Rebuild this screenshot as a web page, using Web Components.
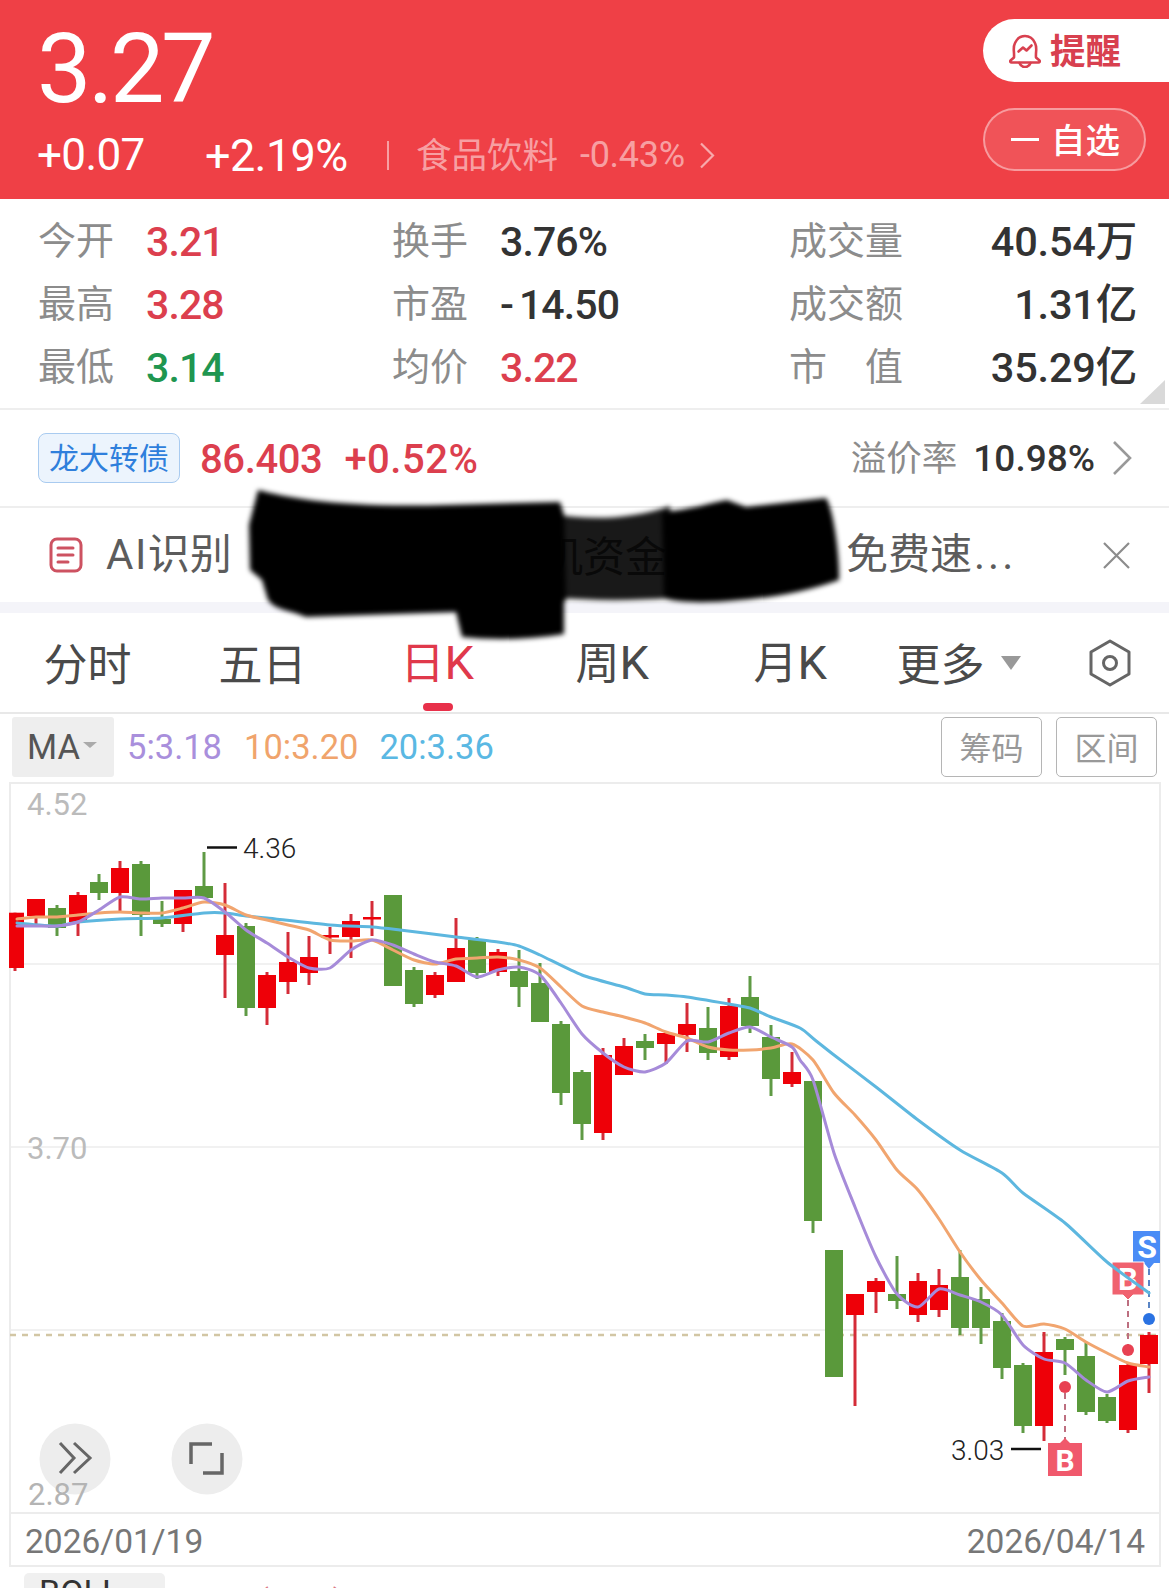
<!DOCTYPE html>
<html lang="zh"><head><meta charset="utf-8"><title>K</title>
<style>
html,body{margin:0;padding:0;background:#fff}
body{width:1169px;height:1588px;overflow:hidden;position:relative;font-family:Roboto,"Noto Sans CJK SC",sans-serif;color:#333}
</style></head><body>
<quote-header></quote-header>
<stat-panel>
  <stat-item tone="red" col="1"><span slot="label">今开</span>3.21</stat-item>
  <stat-item tone="dark" col="2"><span slot="label">换手</span>3.76%</stat-item>
  <stat-item tone="dark" col="3"><span slot="label">成交量</span>40.54万</stat-item>
  <stat-item tone="red" col="1"><span slot="label">最高</span>3.28</stat-item>
  <stat-item tone="dark" col="2"><span slot="label">市盈</span><span style="letter-spacing:5px">-</span>14.50</stat-item>
  <stat-item tone="dark" col="3"><span slot="label">成交额</span>1.31亿</stat-item>
  <stat-item tone="green" col="1"><span slot="label">最低</span>3.14</stat-item>
  <stat-item tone="red" col="2"><span slot="label">均价</span>3.22</stat-item>
  <stat-item tone="dark" col="3"><span slot="label">市　值</span>35.29亿</stat-item>
</stat-panel>
<bond-row></bond-row>
<notice-row></notice-row>
<period-tabs></period-tabs>
<ma-bar></ma-bar>
<kline-chart></kline-chart>
<date-axis></date-axis>
<indicator-bar></indicator-bar>
<redaction-mark></redaction-mark>
<script>
function def(name, html, init){
  customElements.define(name, class extends HTMLElement{
    constructor(){super();const s=this.attachShadow({mode:'open'});s.innerHTML=html;if(init)init(s,this);}
  });
}
const NUM='Roboto,"Noto Sans CJK SC",sans-serif';
def('quote-header',`<style>
:host{display:flex;justify-content:space-between;height:199px;background:#ef4046;color:#fff;font-family:${NUM}}
.l{padding-left:37px}
.p{font-size:97px;line-height:94px;font-weight:450;letter-spacing:-3.500px;margin-top:22px}
.s{display:flex;align-items:center;height:44px;margin-top:17px}
.c{font-size:44px;font-weight:450;letter-spacing:-.6px;width:106px}.pc{font-size:45px;font-weight:450;letter-spacing:-.6px;margin-left:62px;width:145px}
.d{width:2px;height:29px;background:rgba(255,255,255,.5);margin:0 27px 0 37px}
.i{font-size:35.500px;line-height:44px;color:rgba(255,255,255,.52);font-family:"Noto Sans CJK SC",sans-serif;position:relative;top:-2px;width:143px;white-space:nowrap}
.v{font-size:36px;letter-spacing:-.3px;color:rgba(255,255,255,.52);margin-left:21px}
.r{display:flex;flex-direction:column;align-items:flex-end;padding-top:19px}
.a{width:186px;height:63px;box-sizing:border-box;background:#fff;border-radius:32px 0 0 32px;display:flex;align-items:center;padding-left:26px;gap:9px;color:#d8404f;font:700 35.500px/63px "Noto Sans CJK SC",sans-serif}
.a span,.b span{position:relative;top:-2px}
.b{width:163px;height:63px;box-sizing:border-box;margin:26px 23px 0 0;border:2px solid rgba(255,255,255,.42);background:rgba(255,255,255,.1);border-radius:32px;display:flex;align-items:center;padding-left:26px;gap:12px;font:500 34.500px/60px "Noto Sans CJK SC",sans-serif}
.b .m{width:28px;height:3.500px;background:#fff;top:0}
svg{display:block}
</style>
<div class="l"><div class="p">3.27</div><div class="s"><span class="c">+0.07</span><span class="pc">+2.19%</span><span class="d"></span><span class="i">食品饮料</span><span class="v">-0.43%</span>
<svg width="16" height="27" viewBox="0 0 16 27" style="margin-left:14px"><path d="M2 1.500 14 13.500 2 25.500" fill="none" stroke="rgba(255,255,255,.55)" stroke-width="2.200"/></svg></div></div>
<div class="r"><div class="a"><svg width="32" height="34" viewBox="0 0 32 34" fill="none" stroke="#d8404f" stroke-width="2.600" stroke-linejoin="round" stroke-linecap="round"><path d="M5 23.500C5.500 17 3.500 14 6 9 8 4.500 12 2 16 2s8 2.500 10 7c2.500 5 .5 8 1 14.500l3.500 3c.8 1 0 2-1 2H2.500c-1 0-1.800-1-1-2z"/><path d="M10.500 29c1 2.800 3 4 5.500 4s4.500-1.200 5.500-4"/><path d="M9.500 17.500l4.500-4 3.500 3 5-5"/></svg><span>提醒</span></div>
<div class="b"><span class="m"></span><span>自选</span></div></div>`);

def('stat-panel',`<style>
:host{display:grid;grid-template-columns:354px 397px 348px;grid-auto-rows:63px;padding:10px 0 10px 38px;height:189px;border-bottom:2px solid #eee;position:relative}
.t{position:absolute;right:4px;bottom:4px;width:0;height:0;border-style:solid;border-width:0 0 24px 25px;border-color:transparent transparent #d9d9d9 transparent}
</style><slot></slot><div class="t"></div>`);

def('stat-item',`<style>
:host{display:flex;align-items:center;height:63px;font-family:${NUM};font-size:41px;line-height:50px;font-weight:500;letter-spacing:-.9px}
:host([col="3"]){justify-content:space-between;letter-spacing:-.2px;font-size:41.500px}
:host([tone=red]) .v{color:#dc3f4e}
:host([tone=green]) .v{color:#1f9650}
:host([tone=dark]) .v{color:#333}
.v{position:relative;top:1px;white-space:nowrap}
.l{width:108px;flex:none;color:#8c8c8c;font:400 38px/50px "Noto Sans CJK SC",sans-serif;letter-spacing:0;position:relative;top:-3px}
:host([col="3"]) .l{width:auto}
</style><span class="l"><slot name="label"></slot></span><span class="v"><slot></slot></span>`);

def('bond-row',`<style>
:host{display:flex;align-items:center;height:96px;padding:0 37px 0 38px;border-bottom:2px solid #eee;font-family:${NUM};position:relative}
.t{width:142px;height:50px;box-sizing:border-box;border:1.500px solid #a9cbf0;background:#ecf4fd;border-radius:8px;color:#2f7fdc;font:400 30px/44px "Noto Sans CJK SC",sans-serif;text-align:center;margin-right:20px}
.n{font-size:40px;letter-spacing:-.4px;color:#dc3f4e;font-weight:500;position:relative;top:1px}.g{margin-left:22px;letter-spacing:.5px}
.sp{flex:1}
.k{font:400 35.500px/44px "Noto Sans CJK SC",sans-serif;color:#8c8c8c;position:relative;top:-2px}
.o{font-size:37px;color:#333;margin:0 17px 0 16px;font-weight:500}
</style><span class="t">龙大转债</span><span class="n">86.403</span><span class="n g">+0.52%</span><span class="sp"></span><span class="k">溢价率</span><span class="o">10.98%</span>
<svg width="20" height="34" viewBox="0 0 20 34"><path d="M2 1 18 17 2 33" fill="none" stroke="#999" stroke-width="2.600"/></svg>`);

def('notice-row',`<style>
:host{display:flex;align-items:center;height:94px;border-bottom:11px solid #f4f4f9;font:400 42px/50px "Noto Sans CJK SC",sans-serif;color:#5c5c5c;padding:0 38px 0 49px}
.a{margin-left:23px;width:435px;flex:none;position:relative;top:-2px}
.la{font-family:Roboto,sans-serif;letter-spacing:1.500px}
.b{width:263px;flex:none;position:relative;top:-1px}
.c{flex:1;white-space:nowrap;position:relative;top:-2px}
.dots{font-family:Roboto,sans-serif;letter-spacing:3px;margin-left:2px}
</style><svg width="34" height="36" viewBox="0 0 34 36" fill="none" stroke="#cd5261" stroke-width="3" stroke-linecap="round" style="flex:none"><rect x="2" y="2" width="30" height="32" rx="6"/><path d="M9 11h15M9 18h15M9 25h10"/></svg>
<span class="a"><span class="la">AI</span>识别</span><span class="b">机资金</span>
<span class="c">，免费速<span class="dots">...</span></span>
<svg width="29" height="27" viewBox="0 0 29 27" style="flex:none"><path d="M2 1 27 26M27 1 2 26" fill="none" stroke="#8c8c8c" stroke-width="2.200"/></svg>`);

def('period-tabs',`<style>
:host{display:flex;height:99px;border-bottom:2px solid #e8e8e8;font:400 44px/56px "Noto Sans CJK SC",sans-serif;color:#4a4a4a;position:relative}
.t{width:175px;display:flex;align-items:center;justify-content:center;position:relative}
.t>span{position:relative;top:-1px}
.on{color:#e0394b}
.on::after{content:"";position:absolute;left:73px;bottom:1px;width:30px;height:8px;border-radius:4px;background:#e8304a}
.k{font-family:Roboto,sans-serif;font-size:47px;letter-spacing:.5px}
.mo{left:3px}
.more{left:-4px}
.ar{width:0;height:0;border:10.500px solid transparent;border-top:14px solid #999;border-bottom:0;margin-left:16px;margin-top:2px}
.ic{flex:1;display:flex;align-items:center;justify-content:center}
</style><span class="t"><span>分时</span></span><span class="t"><span>五日</span></span><span class="t on"><span>日<span class="k">K</span></span></span><span class="t"><span>周<span class="k">K</span></span></span><span class="t mo"><span>月<span class="k">K</span></span></span>
<span class="t more"><span>更多</span><span class="ar"></span></span>
<span class="ic"><svg width="44" height="48" viewBox="0 0 44 48" fill="none" stroke="#666" stroke-linejoin="round"><path d="M22 2 41 13V35L22 46 3 35V13Z" stroke-width="3"/><circle cx="22" cy="24" r="6.500" stroke-width="3"/></svg></span>`);

def('ma-bar',`<style>
:host{display:flex;align-items:center;height:68px;padding:3px 12px 5px 12px;box-sizing:border-box;font-family:Roboto,sans-serif;font-size:34.500px}
.m{width:102px;height:60px;background:#eee;border-radius:3px;display:flex;align-items:center;padding-left:15px;box-sizing:border-box;color:#555;margin-right:13px}
.ar{width:0;height:0;border:7px solid transparent;border-top:6px solid #aaa;border-bottom:0;margin-left:3px;margin-top:-4px}
.a{color:#a98fdc}.b{color:#f0a46c;margin-left:22px}.c{color:#5ab8e3;margin-left:21px}
.sp{flex:1}
.k{width:101px;height:60px;box-sizing:border-box;border:1.500px solid #b5b5b5;border-radius:5px;color:#999;font:400 32px/56px "Noto Sans CJK SC",sans-serif;text-align:center;margin-left:14px}
</style><span class="m">MA<span class="ar"></span></span><span class="a">5:3.18</span><span class="b">10:3.20</span><span class="c">20:3.36</span><span class="sp"></span><span class="k">筹码</span><span class="k">区间</span>`);

def('kline-chart',`<style>
:host{display:block;height:732px}
svg{display:block}
text{font-family:Roboto,sans-serif}
</style><svg id="s" width="1169" height="732" viewBox="0 782 1169 732"></svg>`, (sh)=>{
  const D=[[1,912.7,968,912.7,971],[1,899,916,899,927],[0,908,928,905,936],[1,895,922,892,936],[0,882,893,874,900],[1,868,893,861,913],[0,864,915,861,936],[0,919,924,901,927],[1,890,924,890,932],[0,886,898,852,898],[1,935,955,883,998],[0,926,1008,923,1016],[1,975,1008,972,1025],[1,962,982,932,994],[1,957,973,936,985],[1,935,937,927,954],[1,921,937,914,958],[1,917,919,901,936],[0,895,986,895,986],
  [0,970,1004,967,1007],[1,975,995,972,998],[1,948,982,918,982],[0,940,973,937,979],[1,952,972,949,976],[0,971,987,950,1007],[0,983,1022,963,1022],[0,1024,1093,1021,1105],[0,1072,1124,1070,1140],[1,1055,1133,1048,1140],[1,1046,1075,1038,1075],[0,1041,1048,1034,1060],[1,1033,1044,1033,1064],[1,1024,1035,1003,1052],[0,1028,1053,1007,1060],[1,1006,1057,998,1060],[0,997,1026,976,1033],[0,1037,1079,1025,1096],[1,1072,1084,1052,1087],[0,1081,1221,1081,1233],
  [0,1250,1377,1250,1377],[1,1294,1315,1294,1406],[1,1281,1292,1278,1313],[0,1294,1301,1256,1309],[1,1281,1315,1273,1322],[1,1285,1310,1269,1317],[0,1277,1328,1250,1335],[0,1299,1328,1287,1344],[0,1321,1368,1313,1379],[0,1365,1426,1363,1433],[1,1352,1426,1332,1441],[0,1339,1350,1337,1375],[0,1356,1412,1343,1415],[0,1397,1421,1394,1423],[1,1365,1430,1363,1433],[1,1335,1364,1332,1393]];
  let o='';
  const ln=(x1,y1,x2,y2,c,w,extra='')=>`<line x1="${x1}" y1="${y1}" x2="${x2}" y2="${y2}" stroke="${c}" stroke-width="${w}" ${extra}/>`;
  o+=ln(10,782,10,1514,'#ececec',2)+ln(1160,782,1160,1514,'#ececec',2);
  o+=ln(10,783,1161,783,'#ececec',2);
  [964,1147,1330].forEach(y=>o+=ln(10,y,1160,y,'#ececec',1.500));
  o+=ln(10,1513,1161,1513,'#ececec',2);
  o+=`<line x1="10" y1="1335" x2="1160" y2="1335" stroke="#d2c6a4" stroke-width="2.600" stroke-dasharray="6 6"/>`;
  D.forEach((d,i)=>{
    const x=15+21*i,up=d[0];
    o+=ln(x,d[3],x,d[4],up?'#d42c38':'#5f9a45',3);
    const l=i==0?x-6:x-9,w=i==0?15:18;
    o+=`<rect x="${l}" y="${d[1]}" width="${w}" height="${Math.max(d[2]-d[1],2.500)}" fill="${up?'#ee0008':'#5a993b'}"/>`;
  });
  const dash=(x,y1,y2,c)=>`<line x1="${x}" y1="${y1}" x2="${x}" y2="${y2}" stroke="${c}" stroke-width="2" stroke-dasharray="6 5"/>`;
  o+=dash(1065,1393,1440,'#bd6f80')+`<circle cx="1065" cy="1387" r="6" fill="#e84152"/>`;
  o+=`<path d="M1048 1443H1060L1065 1438 1070 1443H1082V1476H1048Z" fill="#f0596c"/><text x="1065" y="1471" font-size="30" font-weight="700" fill="#fff" text-anchor="middle">B</text>`;
  o+=dash(1128,1300,1345,'#bd6f80')+`<circle cx="1128" cy="1350" r="6" fill="#e84152"/>`;
  o+=dash(1149,1269,1313,'#5a85c5')+`<circle cx="1149" cy="1319" r="6" fill="#2a72e2"/>`;
  o+=`<path d="M1133 1231H1160V1263H1154L1149 1269 1144 1263H1133Z" fill="#4a8cf6"/><text x="1147" y="1258" font-size="32" font-weight="700" fill="#fff" text-anchor="middle">S</text>`;
  o+=`<path d="M1112 1262H1144V1295H1133L1128 1300 1123 1295H1112Z" fill="#f0626f" stroke="#fff" stroke-width="1"/><text x="1128" y="1290" font-size="31" font-weight="700" fill="#fff" text-anchor="middle">B</text>`;
  const P=(s,c)=>{
    const p=s.split(' ').map(q=>q.split(',').map(Number));
    let d=`M${p[0][0]} ${p[0][1]}`;
    for(let i=0;i<p.length-1;i++){
      const a=p[Math.max(i-1,0)],b=p[i],e=p[i+1],f=p[Math.min(i+2,p.length-1)],k=.12;
      d+=`C${(b[0]+(e[0]-a[0])*k).toFixed(1)} ${(b[1]+(e[1]-a[1])*k).toFixed(1)} ${(e[0]-(f[0]-b[0])*k).toFixed(1)} ${(e[1]-(f[1]-b[1])*k).toFixed(1)} ${e[0]} ${e[1]}`;
    }
    return `<path d="${d}" fill="none" stroke="${c}" stroke-width="3" stroke-linejoin="round" stroke-linecap="round"/>`;
  };
  o+=P('17,923 57,926 78,922 120,919 162,918 204,913 225,913 246,916 267,918 330,925 372,927 400,930 456,937 498,942 519,946 540,955 582,975 624,987 645,994 666,995 687,997 729,1004 750,1008 771,1017 800,1028 815,1040 834,1055 876,1087 918,1120 960,1150 1002,1173 1023,1193 1065,1223 1107,1262 1149,1293','#5db7df');
  o+=P('17,919 36,917 57,917 78,915 99,913 120,912 141,913 162,913 183,908 204,902 225,905 246,915 267,920 288,925 309,930 330,940 351,941 372,940 393,950 414,960 435,964 456,959 477,958 498,957 519,960 540,968 561,987 582,1006 603,1012 624,1017 645,1023 666,1032 687,1038 708,1047 729,1050 750,1050 771,1048 792,1044 813,1060 834,1093 855,1115 876,1140 897,1170 918,1190 939,1219 960,1252 981,1280 1002,1303 1023,1326 1044,1324 1065,1329 1086,1342 1107,1353 1128,1363 1149,1367','#f1a56f');
  o+=P('17,926 36,926 57,926 78,922 99,910 120,897 141,899 162,898 183,898 204,898 225,912 246,930 267,943 288,957 309,968 330,968 351,950 372,940 393,945 414,954 435,962 456,966 477,977 498,970 519,967 540,975 561,1003 582,1034 603,1053 624,1067 645,1072 666,1063 687,1041 708,1042 729,1033 750,1027 771,1037 792,1047 800,1060 813,1080 834,1153 855,1207 876,1257 897,1294 918,1307 939,1289 960,1295 981,1302 1002,1315 1023,1345 1044,1359 1065,1363 1086,1380 1107,1392 1128,1381 1149,1377','#a68bd9');
  o+=`<circle cx="75" cy="1459" r="35.500" fill="#ededed"/><circle cx="207" cy="1459" r="35.500" fill="#ededed"/>`;
  o+=`<path d="M60 1443 74 1458 60 1473M74 1443 90 1458 74 1473" fill="none" stroke="#666" stroke-width="3"/>`;
  o+=`<path d="M191 1464V1444H212M222 1453V1473H203" fill="none" stroke="#666" stroke-width="3.500"/>`;
  const T=(x,y,s,c,sz,a='start',w=400)=>`<text x="${x}" y="${y}" font-size="${sz}" fill="${c}" text-anchor="${a}" font-weight="${w}">${s}</text>`;
  o+=T(27,815,'4.52','#bbb',31)+T(27,1159,'3.70','#bbb',31)+T(28,1505,'2.87','#b4b4b4',31);
  o+=ln(207,847.500,237,847.500,'#111',2.500)+T(243,858,'4.36','#222',28,'start',300);
  o+=ln(1011,1449,1041,1449,'#111',2.500)+T(951,1460,'3.03','#222',28,'start',300);
  sh.getElementById('s').innerHTML=o;
});

def('date-axis',`<style>
:host{display:flex;justify-content:space-between;align-items:center;height:53px;margin:0 8px 0 9px;padding:3px 14px 0 14px;box-sizing:border-box;border-left:2px solid #ececec;border-right:2px solid #ececec;border-bottom:2px solid #ececec;font:400 33.500px Roboto,sans-serif;color:#777}
</style><span>2026/01/19</span><span>2026/04/14</span>`);

def('indicator-bar',`<style>
:host{display:flex;margin:0 8px 0 9px;padding:6px 0 0 15px;height:40px;overflow:hidden;font-family:Roboto,sans-serif}
.b{width:141px;height:60px;background:#f0f0f0;border-radius:5px;font-size:34px;line-height:38px;color:#333;padding-left:15px;box-sizing:border-box;margin-right:11px}
.v{font-size:34px;line-height:38px;white-space:nowrap;margin-top:9px}
</style><span class="b">BOLL</span><span class="v"><span style="color:#dc7a86">BOLL(20,2)</span> <span style="color:#b48a94">BOLL:3.46</span> <span style="color:#cba0a8">UB:4.14</span> <span style="color:#b8b0d8">LB:2.78</span></span>`);

def('redaction-mark',`<style>
:host{position:absolute;left:0;top:0;width:1169px;height:660px;pointer-events:none}
svg{display:block}
</style><svg width="1169" height="660"><defs><filter id="f" x="-5%" y="-5%" width="110%" height="110%"><feGaussianBlur stdDeviation="2.800"/></filter></defs>
<g filter="url(#f)">
<path d="M550 514C590 520 630 520 670 506L672 598C630 601 590 601 550 597Z" fill="#000" fill-opacity=".9"/>
<path d="M258 490C290 498 340 508 447 505L560 502 564 515 566 600 564 602 564 634C530 640 490 640 462 637L456 612 306 617C290 610 275 610 268 600L262 580 250 570 249 525Z" fill="#020202"/>
<path d="M662 512C690 510 710 503 727 500L746 507 826 498C834 510 840 560 839 580 810 590 780 597 740 600 700 604 675 602 664 598Z" fill="#020202"/>
</g></svg>`);
</script>
</body></html>
